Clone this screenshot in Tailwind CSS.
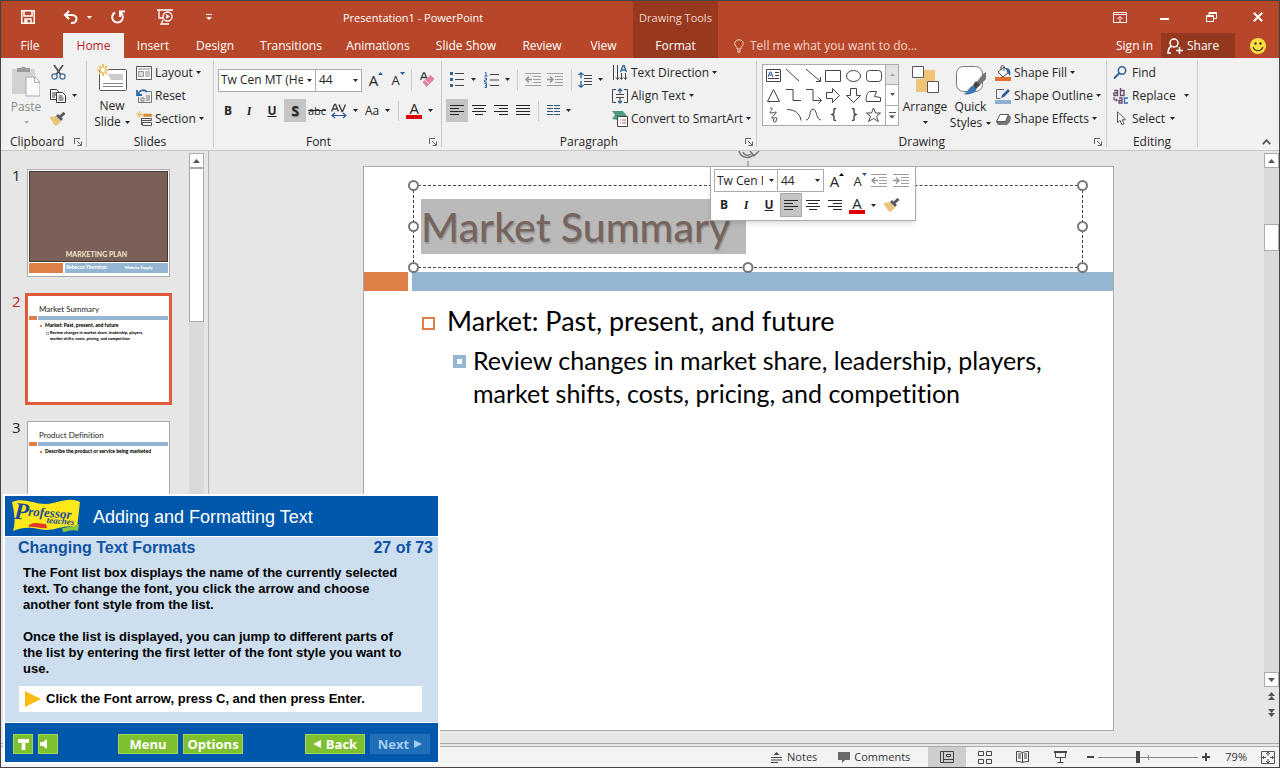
<!DOCTYPE html>
<html lang="en">
<head>
    <meta charset="UTF-8">
    <meta name="viewport" content="width=device-width, initial-scale=1.0">
    <title>Presentation1 - PowerPoint</title>
    <script src="https://cdn.jsdelivr.net/npm/@tailwindcss/browser@4"></script>
</head>
<body class="h-screen overflow-hidden font-['Open_Sans','Noto_Sans',sans-serif] text-[12px] leading-4 text-[#262626]">

<!-- Shared icons -->
<svg class="hidden">
    <symbol id="caret" viewBox="0 0 5 3"><path d="M0 0h5L2.500 3z" fill="currentColor"/></symbol>
    <symbol id="launcher" viewBox="0 0 8 8"><path d="M.5 6V.5H6M3 3l4 4M7.500 3.500v4h-4" fill="none" stroke="currentColor"/></symbol>
    <symbol id="al-left" viewBox="0 0 14 11"><path d="M0 .5h14M0 3.500h9M0 6.500h14M0 9.500h9" stroke="currentColor"/></symbol>
    <symbol id="al-center" viewBox="0 0 14 11"><path d="M0 .5h14M2 3.500h10M0 6.500h14M3 9.500h8" stroke="currentColor"/></symbol>
    <symbol id="al-right" viewBox="0 0 14 11"><path d="M0 .5h14M5 3.500h9M0 6.500h14M5 9.500h9" stroke="currentColor"/></symbol>
    <symbol id="al-just" viewBox="0 0 14 11"><path d="M0 .5h14M0 3.500h14M0 6.500h14M0 9.500h14" stroke="currentColor"/></symbol>
    <symbol id="dedent" viewBox="0 0 16 13"><path d="M0 .5h16M8 3.500h8M8 6.500h8M8 9.500h8M0 12.500h16" stroke="#a0a0a0"/><path d="M1 6.500h6M4 3.500l-3 3 3 3" fill="none" stroke="#959595" stroke-width="1.500"/></symbol>
    <symbol id="indent" viewBox="0 0 16 13"><path d="M0 .5h16M8 3.500h8M8 6.500h8M8 9.500h8M0 12.500h16" stroke="#a0a0a0"/><path d="M0 6.500h6M3 3.500l3 3-3 3" fill="none" stroke="#959595" stroke-width="1.500"/></symbol>
    <symbol id="brush" viewBox="0 0 16 14"><path d="M0 5l6-1 5 6-5 4c-1-1-2-1-3-3C2 8 0 8 0 5z" fill="#ecc379"/><path d="M6 4l2-2 5 5-2 2z" fill="#595959"/><path d="M10 5l4.500-4" stroke="#595959" stroke-width="3"/></symbol>
</svg>

<div class="flex h-full flex-col border border-[#444] bg-[#e6e6e6]">

    <!-- Title bar and tabs -->
    <header class="bg-[#b7472a] text-white">
        <div class="flex h-8 items-stretch">
            <div class="flex flex-1 items-center pl-[19px]">
                <button class="flex w-4 justify-center" aria-label="Save"><svg class="h-[14px] w-[14px]" viewBox="0 0 14 14" fill="none" stroke="#fff"><path d="M.75.75h12.500v12.500H.75zM3 1v5h8V1M4 13V9h6v4" stroke-width="1.500"/><path d="M5.500 10v3" stroke-width="2"/></svg></button>
                <button class="ml-[27px] flex w-4 justify-center" aria-label="Undo"><svg class="h-[14px] w-4" viewBox="0 0 16 14" fill="none" stroke="#fff" stroke-width="2"><path d="M6 1L2 5l4 4M2 5h7c6 0 6 8 0 8H8"/></svg></button>
                <button class="ml-[6px] flex w-2 justify-center" aria-label="Undo history"><svg class="h-[3px] w-[5px]"><use href="#caret"/></svg></button>
                <button class="ml-[17px] flex w-4 justify-center" aria-label="Redo"><svg class="h-[14px] w-[14px]" viewBox="0 0 14 14" fill="none" stroke="#fff" stroke-width="2"><path d="M4 2.500a5.300 5.300 0 1 0 5 0M9 7V1.500h5"/></svg></button>
                <button class="ml-[30px] flex w-[18px] justify-center" aria-label="Start from beginning"><svg class="h-[16px] w-[17px]" viewBox="0 0 17 16" fill="none" stroke="#fff" stroke-width="1.300"><path d="M0 1h16M2 1v8h4M6 11l-2 4h8"/><circle cx="10.500" cy="7.500" r="4.500"/><path d="M9 5l4 2.500L9 10z" fill="#fff" stroke="none"/></svg></button>
                <button class="ml-[31px] flex w-2 justify-center" aria-label="Customize toolbar"><svg class="h-[6px] w-[6px]" viewBox="0 0 6 6"><path d="M0 .5h6" stroke="#fff"/><path d="M0 3h6L3 6z" fill="#fff"/></svg></button>
                <h1 class="ml-[130px] pt-px text-[11px] whitespace-nowrap">Presentation1 - PowerPoint</h1>
            </div>
            <div class="flex w-[85px] items-center justify-center bg-[#96391f] pt-px text-[11px] text-[#f5d5cb]">Drawing Tools</div>
            <div class="flex w-[561px] items-center justify-end gap-[31px] pr-4">
                <button class="mr-[2px]" aria-label="Ribbon display options"><svg class="h-[11px] w-[14px]" viewBox="0 0 14 11" fill="none" stroke="#fff"><path d="M.5.5h13v10H.5zM1 2.500h12M7 10V5M4.500 7L7 4.500 9.500 7"/></svg></button>
                <button aria-label="Minimize"><svg class="h-[11px] w-[10px]" viewBox="0 0 10 11"><path d="M0 7h9" stroke="#fff" stroke-width="2"/></svg></button>
                <button class="ml-[5px]" aria-label="Restore"><svg class="h-[10px] w-[11px]" viewBox="0 0 11 10" fill="none" stroke="#fff"><path d="M.5 3.500h7v6h-7zM.5 4.500h7M3 3V.5h7.500v6H8M3 1.500h7"/></svg></button>
                <button class="ml-[5px]" aria-label="Close"><svg class="h-[10px] w-[10px]" viewBox="0 0 10 10"><path d="M.8.8l8.400 8.400M9.200.8L.8 9.200" stroke="#fff" stroke-width="2"/></svg></button>
            </div>
        </div>
        <nav class="flex h-[25px] items-stretch">
            <div class="flex flex-1 items-stretch">
                <button class="w-[62px] pt-px pr-1">File</button>
                <button class="w-[61px] bg-[#f1f1f1] pt-px text-[#b7272a]">Home</button>
                <button class="w-[58px] pt-px">Insert</button>
                <button class="w-[66px] pt-px">Design</button>
                <button class="w-[86px] pt-px">Transitions</button>
                <button class="w-[88px] pt-px">Animations</button>
                <button class="w-[88px] pt-px">Slide Show</button>
                <button class="w-16 pt-px">Review</button>
                <button class="flex-1 pt-px">View</button>
            </div>
            <button class="w-[85px] bg-[#96391f] pt-px">Format</button>
            <div class="flex w-[561px] items-center">
                <svg class="ml-4 h-[14px] w-[10px]" viewBox="0 0 10 14" fill="none" stroke="#f5d5cb"><path d="M3 10V8.500C-1 5 1 .8 5 .8S11 5 7 8.500V10zM3 12h4M4 13.500h2"/></svg>
                <label for="tell" class="sr-only">Tell me</label>
                <input id="tell" class="ml-[6px] min-w-0 flex-1 pt-px placeholder-[#f5d5cb] outline-none" placeholder="Tell me what you want to do...">
                <button class="mr-2 pt-px">Sign in</button>
                <button class="flex h-full w-[74px] items-center gap-1 bg-[#943920] pt-px pl-[6px]"><svg class="h-4 w-4" viewBox="0 0 16 16" fill="none" stroke="#fff" stroke-width="1.500"><circle cx="7" cy="5" r="4"/><path d="M5 8c-3 1-4 4-4 7h3M9 8l1.500 1M12.500 9v7M9 12.500h7"/></svg>Share</button>
                <svg class="mr-[13px] ml-[15px] h-4 w-4" viewBox="0 0 16 16"><circle cx="8" cy="8" r="8" fill="#ffdf3f"/><circle cx="5.500" cy="5.500" r="1.200" fill="#333"/><circle cx="10.500" cy="5.500" r="1.200" fill="#333"/><path d="M3 9c2 5 8 5 10 0" fill="none" stroke="#333" stroke-width="1.200"/></svg>
            </div>
        </nav>
    </header>

    <!-- Ribbon -->
    <section class="flex h-[93px] shrink-0 items-stretch border-b border-[#c6c6c6] bg-[#f1f1f1] py-[3px] whitespace-nowrap">

        <!-- Clipboard -->
        <div class="flex w-[86px] flex-col border-r border-[#c9c9c9]">
            <div class="flex flex-1 pl-[9px]">
                <button class="flex w-[32px] flex-col items-center pt-[4px] text-[#8a8a8a]">
                    <svg class="h-8 w-7 shrink-0" viewBox="0 0 28 32"><path d="M0 4h23v25H0z" fill="#d2d2d2"/><path d="M5 3h4a3 3 0 0 1 5 0h4v4H5z" fill="#9b9b9b"/><path d="M14 12h9l5 5v14H14z" fill="#fafafa" stroke="#a9a9a9"/><path d="M22.500 12v5.500h5" fill="none" stroke="#a9a9a9"/></svg>
                    <span class="pt-[2px]">Paste</span>
                    <svg class="mt-[6px] h-[3px] w-[5px] shrink-0 text-[#b0b0b0]"><use href="#caret"/></svg>
                </button>
                <div class="ml-2 flex flex-col">
                    <button class="flex h-[23px] w-4 items-center justify-center" aria-label="Cut"><svg class="h-[15px] w-[15px]" viewBox="0 0 15 15" fill="none"><path d="M3 0l7 10M12 0L5 10" stroke="#555" stroke-width="1.800"/><circle cx="3.500" cy="11.500" r="2.600" stroke="#44709c" stroke-width="1.300"/><circle cx="11.500" cy="11.500" r="2.600" stroke="#44709c" stroke-width="1.300"/></svg></button>
                    <button class="flex h-[23px] items-center gap-[6px]" aria-label="Copy"><svg class="h-[14px] w-4" viewBox="0 0 16 14" fill="#fff" stroke="#333"><path d="M.5.5h6l2 2v8h-8zM2 4h4M2 6h4M2 8h3"/><path d="M6.500 3.500h6l3 3v7h-9zM8.500 7h4M8.500 9h5M8.500 11h5"/></svg><svg class="h-[3px] w-[5px]"><use href="#caret"/></svg></button>
                    <button class="flex h-[23px] w-4 items-center" aria-label="Format painter"><svg class="h-[14px] w-4"><use href="#brush"/></svg></button>
                </div>
            </div>
            <div class="flex h-[10px] items-center justify-between pr-[4px] pl-[9px]">Clipboard<svg class="h-2 w-2 text-[#666]"><use href="#launcher"/></svg></div>
        </div>

        <!-- Slides -->
        <div class="flex w-[127px] flex-col border-r border-[#c9c9c9]">
            <div class="flex flex-1 pl-[7px]">
                <button class="flex w-9 flex-col items-center pt-[3px]">
                    <svg class="h-[32px] w-[31px] shrink-0" viewBox="0 0 31 32"><rect x="2.500" y="5.500" width="27" height="21" rx="1" fill="#fff" stroke="#555"/><path d="M11 10h15v6H14z" fill="#ccc"/><path d="M6 19.500h20M6 22.500h20" stroke="#888"/><path d="M6 0v12M0 6h12M2 2l8 8M10 2l-8 8" stroke="#edc374" stroke-width="2"/><circle cx="6" cy="6" r="2" fill="#fff"/></svg>
                    <span class="pt-[2px] leading-[16px]">New</span>
                    <span class="flex items-center gap-1 leading-[16px]">Slide<svg class="h-[3px] w-[5px]"><use href="#caret"/></svg></span>
                </button>
                <div class="ml-[6px] flex flex-col">
                    <button class="flex h-[23px] items-center gap-[3px]"><svg class="h-[14px] w-4" viewBox="0 0 16 14"><path d="M.5.5h15v13H.5z" fill="#fff" stroke="#555"/><path d="M2 3h12M9 6h5M9 8h5M9 10h5" stroke="#888"/><path d="M2.500 5.500h5v5h-5z" fill="#ddd" stroke="#999"/></svg>Layout<svg class="h-[3px] w-[5px]"><use href="#caret"/></svg></button>
                    <button class="flex h-[23px] items-center gap-[3px]"><svg class="h-[14px] w-4" viewBox="0 0 16 14" fill="none"><path d="M2.500 8v5.500h13v-11H9M5 9h3v3H5zM10 7h4M10 9h4M10 11h4" stroke="#777"/><path d="M2 6C3 1 8 0 11 3M1 1v5h5" stroke="#2d6aa8" stroke-width="1.800"/></svg>Reset</button>
                    <button class="flex h-[23px] items-center gap-[3px]"><svg class="h-[15px] w-4" viewBox="0 0 16 15" fill="none"><path d="M8 3.500h7M8 3v2h7V3" stroke="#d08a30" stroke-width="1.500"/><path d="M5.500 7.500h10v2h-10zM6.500 11.500h9v3h-9zM5.500 7v7" stroke="#555"/><path d="M3.500 0v7M0 3.500h7M1 1l5 5M6 1L1 6" stroke="#edc374"/></svg>Section<svg class="h-[3px] w-[5px]"><use href="#caret"/></svg></button>
                </div>
            </div>
            <div class="flex h-[10px] items-center justify-center">Slides</div>
        </div>

        <!-- Font -->
        <div class="flex w-[228px] flex-col border-r border-[#c9c9c9]">
            <div class="flex flex-1 flex-col gap-[7px] pt-[7px] pl-1">
                <div class="flex h-6 items-center">
                    <div class="relative"><label for="font" class="sr-only">Font</label>
                        <select id="font" class="block h-[23px] w-[98px] appearance-none overflow-hidden border border-[#ababab] bg-white pr-3 pl-[2px]"><option>Tw Cen MT (Headings)</option></select>
                        <svg class="pointer-events-none absolute top-[10px] right-[4px] h-[3px] w-[5px]"><use href="#caret"/></svg></div>
                    <div class="relative"><label for="size" class="sr-only">Font size</label>
                        <select id="size" class="block h-[23px] w-[46px] appearance-none border border-l-0 border-[#ababab] bg-white pl-[3px]"><option>44</option></select>
                        <svg class="pointer-events-none absolute top-[10px] right-[4px] h-[3px] w-[5px]"><use href="#caret"/></svg></div>
                    <button class="ml-[6px] flex w-4 items-start justify-center text-[15px]" aria-label="Increase font size">A<svg class="h-[3px] w-[5px] shrink-0 text-[#2b5797]" viewBox="0 0 5 3"><path d="M0 3h5L2.500 0z" fill="currentColor"/></svg></button>
                    <button class="ml-[6px] flex w-4 items-start justify-center text-[13px]" aria-label="Decrease font size">A<svg class="h-[3px] w-[5px] shrink-0 text-[#2b5797]"><use href="#caret"/></svg></button>
                    <span class="ml-[5px] h-5 w-px bg-[#c9c9c9]"></span>
                    <button class="ml-2" aria-label="Clear formatting"><svg class="h-4 w-[15px]" viewBox="0 0 15 16"><path d="M.5 8L3.500 1h1l3 7M2 5.500h4" fill="none" stroke="#444" stroke-width="1.300"/><path d="M2.500 10l8-7 4 4-8 8z" fill="#e0849a"/><path d="M5 8l4.500 4.500" stroke="#fbd8e0"/></svg></button>
                </div>
                <div class="flex h-[23px] items-center font-bold">
                    <button class="w-[20px]">B</button>
                    <button class="w-[22px] font-serif italic">I</button>
                    <button class="w-[24px] underline">U</button>
                    <button class="h-full w-[22px] bg-[#c5c5c5] text-[14px] text-shadow-[1px_1px_1px_#777]">S</button>
                    <button class="w-[22px] text-[11px] font-normal line-through">abc</button>
                    <button class="ml-[3px] flex items-center gap-[6px] font-normal" aria-label="Character spacing"><svg class="h-4 w-4" viewBox="0 0 16 16" fill="none"><path d="M.5 8.500l3-7h1l3 7M2 6h4M8 1.500l3 7h.5l3-7" stroke="#444" stroke-width="1.400"/><path d="M1 12.500h14M4 10l-3 2.500L4 15M12 10l3 2.500-3 2.500" stroke="#2b5797" stroke-width="1.200"/></svg><svg class="h-[3px] w-[5px]"><use href="#caret"/></svg></button>
                    <button class="ml-[7px] flex items-center gap-[6px] font-normal">Aa<svg class="h-[3px] w-[5px]"><use href="#caret"/></svg></button>
                    <span class="ml-2 h-5 w-px bg-[#c9c9c9]"></span>
                    <button class="ml-[7px] flex items-center gap-[6px] font-normal" aria-label="Font color"><span class="w-4 border-b-4 border-[#e00000] text-[15px] leading-[13px]">A</span><svg class="h-[3px] w-[5px]"><use href="#caret"/></svg></button>
                </div>
            </div>
            <div class="flex h-[10px] items-center justify-end gap-[98px] pr-[4px]">Font<svg class="h-2 w-2 text-[#666]"><use href="#launcher"/></svg></div>
        </div>

        <!-- Paragraph -->
        <div class="flex w-[315px] flex-col border-r border-[#c9c9c9]">
            <div class="flex flex-1">
                <div class="flex w-[170px] flex-col gap-[8px] pt-[7px] pl-1">
                    <div class="flex h-[23px] items-center">
                        <button class="ml-[4px] flex items-center gap-[7px]" aria-label="Bullets"><svg class="h-[15px] w-[14px]" viewBox="0 0 14 15"><path d="M5 1.500h9M5 7.500h9M5 13.500h9" stroke="#444"/><path d="M0 0h3v3H0zM0 6h3v3H0zM0 12h3v3H0z" fill="#2f6299"/></svg><svg class="h-[3px] w-[5px]"><use href="#caret"/></svg></button>
                        <button class="ml-[8px] flex items-center gap-[6px]" aria-label="Numbering"><svg class="h-4 w-[15px]" viewBox="0 0 15 16" fill="none"><path d="M6 2.500h9M6 8h9M6 13.500h9" stroke="#444"/><path d="M1 .5h1V4M.5 4h3M.5 6h2v2h-2v2H3M.5 11.500h2v4h-2M1 13.500h2" stroke="#2f6299"/></svg><svg class="h-[3px] w-[5px]"><use href="#caret"/></svg></button>
                        <span class="ml-[7px] h-5 w-px bg-[#c9c9c9]"></span>
                        <button class="ml-[7px]" aria-label="Decrease indent"><svg class="h-[13px] w-4"><use href="#dedent"/></svg></button>
                        <button class="ml-[6px]" aria-label="Increase indent"><svg class="h-[13px] w-4"><use href="#indent"/></svg></button>
                        <span class="ml-[8px] h-5 w-px bg-[#c9c9c9]"></span>
                        <button class="ml-[6px] flex items-center gap-[6px]" aria-label="Line spacing"><svg class="h-4 w-[14px]" viewBox="0 0 14 16" fill="none"><path d="M6 3.500h8M6 6.500h8M6 9.500h8M6 12.500h8" stroke="#444"/><path d="M3 .5v6M.5 3L3 .8 5.500 3M3 9v6M.5 13L3 15.200 5.500 13" stroke="#2f6299" stroke-width="1.300"/></svg><svg class="h-[3px] w-[5px]"><use href="#caret"/></svg></button>
                    </div>
                    <div class="flex h-[23px] items-center">
                        <button class="flex h-full w-[22px] items-center justify-center bg-[#c5c5c5]" aria-label="Align left"><svg class="h-[11px] w-[14px]"><use href="#al-left"/></svg></button>
                        <button class="flex w-[22px] justify-center" aria-label="Center"><svg class="h-[11px] w-[14px]"><use href="#al-center"/></svg></button>
                        <button class="flex w-[22px] justify-center" aria-label="Align right"><svg class="h-[11px] w-[14px]"><use href="#al-right"/></svg></button>
                        <button class="flex w-[22px] justify-center" aria-label="Justify"><svg class="h-[11px] w-[14px]"><use href="#al-just"/></svg></button>
                        <span class="ml-1 h-5 w-px bg-[#c9c9c9]"></span>
                        <button class="ml-2 flex items-center gap-[6px]" aria-label="Columns"><svg class="h-[11px] w-[13px]" viewBox="0 0 13 11"><path d="M0 .5h6M0 3.500h6M0 6.500h6M0 9.500h6M7 .5h6M7 3.500h6M7 6.500h6M7 9.500h6" stroke="#2f5580"/></svg><svg class="h-[3px] w-[5px]"><use href="#caret"/></svg></button>
                    </div>
                </div>
                <div class="flex flex-col">
                    <button class="flex h-[23px] items-center gap-[3px]"><svg class="h-4 w-4" viewBox="0 0 16 16" fill="none"><path d="M1.500 0v15M5.500 0v15M9.500 8v6M13.500 8v6M4 12.500l1.500 2L7 12.500M8 12.500l1.500 2 1.500-2M12 12.500l1.500 2 1.500-2" stroke="#444"/><path d="M8.500 7l2.500-6.500h1L14.500 7M9.500 5h4" stroke="#2f6299" stroke-width="1.300"/></svg>Text Direction<svg class="h-[3px] w-[5px]"><use href="#caret"/></svg></button>
                    <button class="flex h-[23px] items-center gap-[3px]"><svg class="h-4 w-4" viewBox="0 0 16 16" fill="none"><path d="M4 1.500H.5v13H4M12 1.500h3.500v13H12M4 6.500h8M4 9.500h8" stroke="#444"/><path d="M8 .5v5M6 3l2-2 2 2M8 10v5M6 13l2 2 2-2" stroke="#2f6299" stroke-width="1.300"/></svg>Align Text<svg class="h-[3px] w-[5px]"><use href="#caret"/></svg></button>
                    <button class="flex h-[23px] items-center gap-[3px]"><svg class="h-4 w-4" viewBox="0 0 16 16"><path d="M0 0h11l4 5H6v4L0 8l3-4z" fill="#4f9a83"/><path d="M5.500 5.500h10v10h-10z" fill="#fff" stroke="#444"/><path d="M8 9h1M8 12h1M10 9h4M10 12h4" stroke="#b06060"/></svg>Convert to SmartArt<svg class="h-[3px] w-[5px]"><use href="#caret"/></svg></button>
                </div>
            </div>
            <div class="flex h-[10px] items-center justify-end gap-[127px] pr-[3px]">Paragraph<svg class="h-2 w-2 text-[#666]"><use href="#launcher"/></svg></div>
        </div>

        <!-- Drawing -->
        <div class="flex w-[350px] flex-col border-r border-[#c9c9c9]">
            <div class="flex flex-1">
                <div class="mt-[3px] ml-[5px] flex h-[62px] w-[137px] border border-[#ababab] bg-white">
                    <svg class="h-[60px] w-[122px]" viewBox="0 0 122 60" fill="none" stroke="#444">
                        <path d="M3.500 4.500h14v12h-14zM12 7.500h4M12 10.500h4M5 13.500h11"/><path d="M5 12l2-5h1l2 5M6 10h3" stroke="#2f5597"/>
                        <path d="M23 4l13 12M43 4l14 12M57.500 12v4.500H53M62.500 5.500h15v11h-15zM4.500 36.500l6-12 6 12z"/>
                        <ellipse cx="90.500" cy="11" rx="7" ry="5.500"/><rect x="103.500" y="5.500" width="15" height="11" rx="3"/>
                        <path d="M23 24.500h7v11h8M43 24.500h7v11h8M55.500 32.500l3 3-3 3M63.500 27.500h6v-4l7 7-7 7v-4h-6zM87.500 23.500h6v7h4l-7 7-7-7h4zM103.500 36.500c-1-4 0-8 3-10h7l-2 5 6 1v4z"/>
                        <path d="M7 43c6 0-3 5 1 5s7-3 4 1-5 5-1 4 3 0 2 3-4 0-2-2M24 44.500c8 0 13 4 14 11M43 55c5 0 3-11 7-11s3 11 8 11"/>
                        <path d="M73 43.500c-3 0-2 1-2 3s0 2-2 3c2 1 2 1 2 3s-1 3 2 3M89 43.500c3 0 2 1 2 3s0 2 2 3c-2 1-2 1-2 3s1 3-2 3" stroke-width="1.400"/>
                        <path d="M110.500 43l2 5h5l-4 3.500 2 5-5-3-5 3 2-5-4-3.500h5z"/>
                    </svg>
                    <div class="flex flex-1 flex-col border-l border-[#ababab] text-[#555]">
                        <button class="flex flex-1 items-center justify-center bg-[#e3e3e3] text-[#aaa]" aria-label="Scroll up"><svg class="h-[3px] w-[5px]" viewBox="0 0 5 3"><path d="M0 3h5L2.500 0z" fill="currentColor"/></svg></button>
                        <button class="flex flex-1 items-center justify-center border-y border-[#ababab]" aria-label="Scroll down"><svg class="h-[3px] w-[5px]"><use href="#caret"/></svg></button>
                        <button class="flex flex-1 flex-col items-center justify-center gap-[2px]" aria-label="More shapes"><span class="h-px w-[7px] bg-[#555]"></span><svg class="h-[4px] w-[6px]" viewBox="0 0 5 3"><use href="#caret"/></svg></button>
                    </div>
                </div>
                <button class="ml-1 flex w-[44px] flex-col items-center pt-[4px]">
                    <svg class="h-[28px] w-[28px] shrink-0" viewBox="0 0 28 28"><path d="M12 5h12v12H12zM5 14h11v13H5z" fill="#f0c376"/><path d="M1.500 1.500h11v11h-11zM16.500 16.500h11v11h-11z" fill="#fff" stroke="#555"/></svg>
                    <span class="mt-[6px]">Arrange</span>
                    <svg class="mt-[6px] h-[3px] w-[5px] shrink-0"><use href="#caret"/></svg>
                </button>
                <button class="ml-[3px] flex w-[41px] flex-col items-center pt-[4px]">
                    <svg class="h-[31px] w-[30px] shrink-0" viewBox="0 0 30 31"><rect x=".5" y="1.500" width="26" height="25" rx="7" fill="#fff" stroke="#777"/><path d="M19 19l8-10 3-2v7l-8 8z" fill="#777"/><path d="M7 29c5-1 5-6 9-8 4-1 6 3 3 6-3 2-8 3-12 2z" fill="#3c78b4"/><path d="M17 20l3-4 4 4-4 4z" fill="#444"/></svg>
                    <span class="pt-[3px] leading-[16px]">Quick</span>
                    <span class="flex items-center gap-1 leading-[16px]">Styles<svg class="h-[3px] w-[5px]"><use href="#caret"/></svg></span>
                </button>
                <div class="ml-[4px] flex flex-col">
                    <button class="flex h-[23px] items-center gap-[3px]"><svg class="h-4 w-4" viewBox="0 0 16 16"><path d="M0 12h16v4H0z" fill="#e0702c"/><path d="M3 7l6-5 5 5-6 5z" fill="#fff" stroke="#444"/><path d="M6 5V2c0-2 3-2 3 0v4" fill="none" stroke="#444"/><path d="M11 3c4 0 5 3 4 8l-3-4z" fill="#2f6299"/></svg>Shape Fill<svg class="h-[3px] w-[5px]"><use href="#caret"/></svg></button>
                    <button class="flex h-[23px] items-center gap-[3px]"><svg class="h-4 w-4" viewBox="0 0 16 16"><path d="M0 12h16v4H0z" fill="#8fb0d0"/><path d="M9 1.500H1.500v9h4" fill="none" stroke="#666"/><path d="M6 10l1-3 6-6 2 2-6 6z" fill="#2f6299"/></svg>Shape Outline<svg class="h-[3px] w-[5px]"><use href="#caret"/></svg></button>
                    <button class="flex h-[23px] items-center gap-[3px]"><svg class="h-4 w-4" viewBox="0 0 16 16"><path d="M5 4h9l2 2-1 5-3 3H3l-2-3z" fill="#777"/><path d="M5 3.500h8.500l-3 7H1.500z" fill="#fff" stroke="#555"/></svg>Shape Effects<svg class="h-[3px] w-[5px]"><use href="#caret"/></svg></button>
                </div>
            </div>
            <div class="flex h-[10px] items-center justify-end gap-[149px] pr-[4px]">Drawing<svg class="h-2 w-2 text-[#666]"><use href="#launcher"/></svg></div>
        </div>

        <!-- Editing -->
        <div class="flex w-[91px] flex-col border-r border-[#c9c9c9]">
            <div class="flex flex-1 flex-col pl-[6px]">
                <button class="flex h-[23px] items-center gap-[5px]"><svg class="h-[13px] w-[14px]" viewBox="0 0 14 13" fill="none" stroke="#2f6299"><circle cx="9" cy="4.500" r="3.700" stroke-width="1.500"/><path d="M6 7.500L1 12.500" stroke-width="2"/></svg>Find</button>
                <button class="flex h-[23px] items-center gap-[4px]"><svg class="h-4 w-[15px]" viewBox="0 0 15 16" fill="none" stroke-width="1.400"><path d="M1 2.500h3.500v5H1V5h3.500M7.500 0v7.500H11v-5H7.500" stroke="#6b4a6f"/><path d="M6 10h3v5H6v-2.500h3" stroke="#6b4a6f"/><path d="M1 9v3h3M3 10.500L4.500 12 3 13.500" stroke="#444" stroke-width="1"/><path d="M15 10h-3.500v5H15" stroke="#2f6fb5"/></svg>Replace<svg class="ml-1 h-[3px] w-[5px]"><use href="#caret"/></svg></button>
                <button class="flex h-[23px] items-center gap-[5px]"><svg class="h-[15px] w-[14px]" viewBox="0 0 14 15"><path d="M4.500.8v11l2.500-2.500 2 4.500 2-1-2-4h3.500z" fill="#fff" stroke="#555"/></svg>Select<svg class="h-[3px] w-[5px]"><use href="#caret"/></svg></button>
            </div>
            <div class="flex h-[10px] items-center justify-center">Editing</div>
        </div>
        <div class="flex flex-1 items-end justify-end pr-2 pb-[2px]"><button class="leading-none" aria-label="Collapse ribbon"><svg class="h-[6px] w-[9px]" viewBox="0 0 9 6"><path d="M.8 5.200l3.700-4 3.700 4" fill="none" stroke="#555" stroke-width="1.800"/></svg></button></div>
    </section>

    <!-- Work area -->
    <main class="flex min-h-0 flex-1 font-['Lato',sans-serif] [font-variant-ligatures:none]">

        <!-- Slide thumbnails -->
        <aside class="flex w-[208px] shrink-0 overflow-hidden border-r border-[#b4b4b4]">
            <ol class="flex flex-1 flex-col gap-[18px] pt-[18px] pl-[11px]">
                <li class="flex shrink-0 gap-[5px]"><span class="w-[10px] font-['Open_Sans'] text-[15px] leading-3">1</span>
                    <div class="flex h-[108px] w-[143px] flex-col border border-[#ababab] bg-white p-px">
                        <div class="flex flex-1 items-end justify-center border border-[#403733] bg-[#7b6057] pr-1 pb-[2px] text-[7px] leading-[10px] font-bold text-[#f0e6cf]">MARKETING PLAN</div>
                        <div class="mt-px mb-[2px] flex h-[10px] gap-[2px] text-[5px] leading-[9px] font-black text-white"><div class="w-[34px] bg-[#dd8047]"></div><div class="flex flex-1 gap-[18px] bg-[#94b6d2] pl-px"><span>Rebecca Thornton</span><span class="text-[4px]">Website Supply</span></div></div>
                    </div></li>
                <li class="flex shrink-0 gap-[5px]"><span class="w-[10px] font-['Open_Sans'] text-[15px] leading-3 text-[#b7272a]">2</span>
                    <div class="h-[108px] w-[143px] bg-white px-[2px] pt-[9px] outline-3 outline-offset-[-1px] outline-[#e05a3c]">
                        <h3 class="pl-[10px] text-[8px] leading-[10px]">Market Summary</h3>
                        <div class="mt-[2px] flex h-1 gap-px"><div class="w-2 bg-[#dd8047]"></div><div class="flex-1 bg-[#94b6d2]"></div></div>
                        <p class="mt-[2px] flex items-center gap-[3px] pl-[11px] text-[5px] leading-[7px] font-black text-black"><span class="h-[2px] w-[2px] bg-[#dd8047]"></span>Market: Past, present, and future</p>
                        <p class="mt-px flex gap-px pl-[17px] text-[4px] leading-[6px] font-black text-black"><span class="mt-[2px] h-[3px] w-[3px] border border-[#94b6d2]"></span><span>Review changes in market share, leadership, players,<br>market shifts, costs, pricing, and competition</span></p>
                    </div></li>
                <li class="flex shrink-0 gap-[5px]"><span class="w-[10px] font-['Open_Sans'] text-[15px] leading-3">3</span>
                    <div class="h-[108px] w-[143px] border border-[#ababab] bg-white px-px pt-2">
                        <h3 class="pl-[10px] text-[8px] leading-[10px]">Product Definition</h3>
                        <div class="mt-[2px] flex h-1 gap-px"><div class="w-2 bg-[#dd8047]"></div><div class="flex-1 bg-[#94b6d2]"></div></div>
                        <p class="mt-[2px] flex items-center gap-[3px] pl-[11px] text-[5px] leading-[7px] font-black text-black"><span class="h-[2px] w-[2px] bg-[#dd8047]"></span>Describe the product or service being marketed</p>
                    </div></li>
            </ol>
            <div class="mt-[2px] mr-1 w-[15px] bg-[#dadada]">
                <button class="flex h-[15px] w-full items-center justify-center border border-[#ababab] bg-white" aria-label="Scroll up"><svg class="h-[4px] w-[7px]" viewBox="0 0 7 4"><path d="M0 4h7L3.500 0z" fill="#555"/></svg></button>
                <div class="h-[154px] border border-[#ababab] bg-white"></div>
            </div>
        </aside>

        <!-- Slide canvas -->
        <div class="flex min-w-0 flex-1 justify-center overflow-hidden pt-[15px] pb-[12px] pl-1">
            <article class="relative flex aspect-[751/565] h-full flex-col border border-[#ababab] bg-white text-black">
                <div class="relative mt-[18px] mr-[30px] ml-[49px] h-[83px] border border-dashed border-[#444] px-[7px] py-[13px]">
                    <h2 class="inline-block bg-[#bababa] pr-4 text-[41px] leading-[55px] font-medium text-[#75655e] text-shadow-[1px_2px_1px_#999]">Market Summary</h2>
                    <svg class="absolute -top-[41px] left-[324px] h-[41px] w-6" viewBox="0 0 24 41" fill="none" stroke="#777"><path d="M10 16v25"/><path d="M1 6a8.500 8.500 0 0 0 15 3M5 7a5 5 0 0 0 8 2M12 6l4 5 5-5" stroke-width="1.500"/></svg>
                    <span class="absolute -top-[6px] -left-[6px] h-[11px] w-[11px] rounded-full border-2 border-[#777] bg-white"></span>
                    <span class="absolute top-[35px] -left-[6px] h-[11px] w-[11px] rounded-full border-2 border-[#777] bg-white"></span>
                    <span class="absolute -bottom-[6px] -left-[6px] z-10 h-[11px] w-[11px] rounded-full border-2 border-[#777] bg-white"></span>
                    <span class="absolute -bottom-[6px] left-1/2 z-10 h-[11px] w-[11px] -translate-x-1/2 rounded-full border-2 border-[#777] bg-white"></span>
                    <span class="absolute -top-[6px] -right-[6px] h-[11px] w-[11px] rounded-full border-2 border-[#777] bg-white"></span>
                    <span class="absolute top-[35px] -right-[6px] h-[11px] w-[11px] rounded-full border-2 border-[#777] bg-white"></span>
                    <span class="absolute -right-[6px] -bottom-[6px] z-10 h-[11px] w-[11px] rounded-full border-2 border-[#777] bg-white"></span>
                </div>
                <div class="mt-[4px] flex h-[19px] gap-1"><div class="w-11 bg-[#dd8047]"></div><div class="flex-1 bg-[#94b6d2]"></div></div>
                <ul class="pt-[12px] pl-[58px]">
                    <li class="flex items-start gap-[12px] text-[27px] leading-9"><span class="mt-[14px] h-[13px] w-[13px] shrink-0 border-2 border-[#dd8047]"></span>Market: Past, present, and future</li>
                    <li class="mt-[5px] flex items-start gap-[7px] pl-[31px] text-[25px] leading-[33px]"><span class="mt-[11px] h-[13px] w-[13px] shrink-0 border-4 border-[#94b6d2]"></span><span>Review changes in market share, leadership, players,<br>market shifts, costs, pricing, and competition</span></li>
                </ul>

                <!-- Mini toolbar -->
                <div class="absolute -top-px left-[346px] z-20 flex h-[55px] w-[206px] flex-col border border-[#ababab] bg-white px-[3px] pt-px font-['Open_Sans'] text-[12px] leading-4 text-[#262626] shadow-md">
                    <div class="flex h-[25px] items-center">
                        <div class="relative"><label for="mini-font" class="sr-only">Font</label>
                            <select id="mini-font" class="block h-[23px] w-[64px] appearance-none overflow-hidden border border-[#ababab] bg-white pr-[14px] pl-[2px]"><option>Tw Cen MT (Headings)</option></select>
                            <svg class="pointer-events-none absolute top-[10px] right-[4px] h-[3px] w-[5px]"><use href="#caret"/></svg></div>
                        <div class="relative"><label for="mini-size" class="sr-only">Font size</label>
                            <select id="mini-size" class="block h-[23px] w-[46px] appearance-none border border-l-0 border-[#ababab] bg-white pl-[3px]"><option>44</option></select>
                            <svg class="pointer-events-none absolute top-[10px] right-[4px] h-[3px] w-[5px]"><use href="#caret"/></svg></div>
                        <button class="ml-[5px] flex w-4 items-start justify-center text-[15px]" aria-label="Increase font size">A<svg class="h-[3px] w-[5px] shrink-0" viewBox="0 0 5 3"><path d="M0 3h5L2.500 0z"/></svg></button>
                        <button class="ml-[7px] flex w-4 items-start justify-center text-[13px]" aria-label="Decrease font size">A<svg class="h-[3px] w-[5px] shrink-0 text-[#2b5797]"><use href="#caret"/></svg></button>
                        <button class="ml-[3px]" aria-label="Decrease indent"><svg class="h-[13px] w-4"><use href="#dedent"/></svg></button>
                        <button class="ml-[6px]" aria-label="Increase indent"><svg class="h-[13px] w-4"><use href="#indent"/></svg></button>
                    </div>
                    <div class="flex h-6 items-center font-bold">
                        <button class="w-5">B</button>
                        <button class="w-6 font-serif italic">I</button>
                        <button class="w-[22px] underline">U</button>
                        <button class="flex h-full w-[22px] items-center justify-center border border-[#ababab] bg-[#c5c5c5]" aria-label="Align left"><svg class="h-[11px] w-[14px]"><use href="#al-left"/></svg></button>
                        <button class="flex w-[22px] justify-center" aria-label="Center"><svg class="h-[11px] w-[14px]"><use href="#al-center"/></svg></button>
                        <button class="flex w-[22px] justify-center" aria-label="Align right"><svg class="h-[11px] w-[14px]"><use href="#al-right"/></svg></button>
                        <button class="ml-[3px] flex items-center gap-[6px] font-normal" aria-label="Font color"><span class="w-4 border-b-4 border-[#e00000] text-[15px] leading-[13px]">A</span><svg class="h-[3px] w-[5px]"><use href="#caret"/></svg></button>
                        <button class="ml-2" aria-label="Format painter"><svg class="h-[14px] w-4"><use href="#brush"/></svg></button>
                    </div>
                </div>
            </article>
        </div>

        <!-- Vertical scroll bar -->
        <div class="mt-[2px] flex w-[15px] shrink-0 flex-col text-[#555]">
            <button class="flex h-[15px] items-center justify-center border border-[#ababab] bg-white" aria-label="Scroll up"><svg class="h-[4px] w-[7px]" viewBox="0 0 7 4"><path d="M0 4h7L3.500 0z" fill="currentColor"/></svg></button>
            <div class="flex-1 bg-[#dadada] pt-[56px]"><div class="h-[27px] border border-[#ababab] bg-white"></div></div>
            <button class="flex h-[15px] items-center justify-center border border-[#ababab] bg-white" aria-label="Scroll down"><svg class="h-[4px] w-[7px]" viewBox="0 0 7 4"><path d="M0 0h7L3.500 4z" fill="currentColor"/></svg></button>
            <button class="mt-[5px] flex justify-center" aria-label="Previous slide"><svg class="h-[8px] w-[7px]" viewBox="0 0 7 8"><path d="M0 4h7L3.500 0zM0 8h7L3.500 4z" fill="currentColor"/></svg></button>
            <button class="mt-[9px] mb-[26px] flex justify-center" aria-label="Next slide"><svg class="h-[8px] w-[7px]" viewBox="0 0 7 8"><path d="M0 0h7L3.500 4zM0 4h7L3.500 8z" fill="currentColor"/></svg></button>
        </div>
    </main>

    <!-- Status bar -->
    <footer class="flex h-6 shrink-0 items-stretch justify-end border-t border-[#ababab]">
        <div class="mt-[2px] flex flex-1 items-center justify-end border-t border-[#ababab] bg-[#f3f3f3] text-[11px] text-[#333]">
            <button class="flex items-center gap-[5px]"><svg class="h-[11px] w-[11px]" viewBox="0 0 11 11"><path d="M2.500 3h6l-3-3z" fill="#444"/><path d="M0 5.500h11M0 8h11M0 10.500h7" stroke="#444"/></svg>Notes</button>
            <button class="ml-[21px] flex items-center gap-1"><svg class="h-[11px] w-3" viewBox="0 0 12 11"><path d="M0 0h12v8H7l-3 3V8H0z" fill="#6a6a6a"/></svg>Comments</button>
            <button class="ml-[18px] flex h-full w-[38px] items-center justify-center bg-[#cdcdcd]" aria-label="Normal view"><svg class="h-[12px] w-[14px]" viewBox="0 0 14 12" fill="none" stroke="#444"><path d="M.5.5h13v11H.5zM3.500 1v10M4 8.500h9M6.500 3.500h4v2h-4z"/></svg></button>
            <button class="flex w-[38px] justify-center" aria-label="Slide sorter"><svg class="h-[13px] w-[14px]" viewBox="0 0 14 13" fill="none" stroke="#444"><path d="M.5.5h5v4h-5zM8.500.5h5v4h-5zM.5 8.500h5v4h-5zM8.500 8.500h5v4h-5z"/></svg></button>
            <button class="flex w-[37px] justify-center" aria-label="Reading view"><svg class="h-[12px] w-[14px]" viewBox="0 0 14 12" fill="none" stroke="#444"><path d="M6.500 1.500c-2-1-4-1-6-1v10c2 0 4 0 6 1 2-1 4-1 6-1V.5c-2 0-4 0-6 1v10M2 3h3M2 5h3M2 7h3M8 3h3M8 5h3M8 7h3"/></svg></button>
            <button class="flex w-[38px] justify-center" aria-label="Slide show"><svg class="h-[12px] w-[13px]" viewBox="0 0 13 12" fill="none" stroke="#444"><path d="M0 1h13" stroke-width="2"/><path d="M1.500 2v4.500h10V2M6.500 7v4M3.500 11.500h6"/></svg></button>
            <button class="ml-2 w-[7px]" aria-label="Zoom out"><span class="block h-[2px] bg-[#444]"></span></button>
            <label for="zoom" class="sr-only">Zoom</label>
            <div class="relative ml-[4px] flex h-4 w-[100px] items-center">
                <input id="zoom" type="range" value="39" class="h-3 w-full appearance-none bg-[linear-gradient(#8a8a8a,#8a8a8a)] bg-[length:100%_1px] bg-center bg-no-repeat [&::-webkit-slider-thumb]:h-3 [&::-webkit-slider-thumb]:w-1 [&::-webkit-slider-thumb]:appearance-none [&::-webkit-slider-thumb]:bg-[#444]">
                <span class="pointer-events-none absolute top-[6px] left-1/2 h-[5px] w-px bg-[#8a8a8a]"></span>
            </div>
            <button class="ml-[4px]" aria-label="Zoom in"><svg class="h-2 w-2" viewBox="0 0 8 8"><path d="M0 4h8M4 0v8" stroke="#444" stroke-width="2"/></svg></button>
            <span class="ml-[15px]">79%</span>
            <button class="mr-[4px] ml-[14px]" aria-label="Fit slide to window"><svg class="h-[13px] w-[14px]" viewBox="0 0 14 13" fill="none" stroke="#555"><path d="M.5.5h13v12H.5zM7 1v4M5 3l2-2 2 2M7 12V8M5 10l2 2 2-2M1 6.500h4M3 5L1.500 6.500 3 8M13 6.500H9M11 5l1.500 1.500L11 8"/></svg></button>
        </div>
    </footer>
</div>

<!-- Tutorial panel -->
<section class="absolute bottom-[4px] left-[3px] flex w-[437px] flex-col border-2 border-white bg-[#cddeee] font-['Liberation_Sans',Arial,sans-serif] text-black">
    <div class="flex h-[41px] items-center border-b border-white bg-[#0058ac] pl-[6px] text-white">
        <svg class="h-[34px] w-[70px]" viewBox="0 0 70 34">
            <path d="M1 3C14-3 26 8 42 4s20-4 27-1l-3 26c-12-6-22 5-38 1C18 28 12 28 2 32c3-9 1-20-1-29z" fill="#ffe81a"/>
            <path d="M18 26c6-4 12-1 17-1l1 4c-6 1-12-2-18-1z" fill="#e1372b"/>
            <path d="M51 29c6-1 11-1 17-4l-1 7c-6-2-11 1-15 1z" fill="#8cc63f"/>
            <g transform="rotate(4 35 17)" fill="#1a4a9c" font-family="Liberation Serif" font-weight="bold" font-style="italic"><text x="3" y="22" font-size="24">P</text><text x="17" y="18" font-size="13">rofessor</text><text x="36" y="24" font-size="9">teaches</text></g>
        </svg>
        <h2 class="ml-[12px] pt-[2px] text-[18px] leading-6">Adding and Formatting Text</h2>
    </div>
    <div class="flex justify-between pt-px pr-[5px] pl-[13px] text-[16px] leading-5 font-bold text-[#0f53a4]"><h3>Changing Text Formats</h3><span>27 of 73</span></div>
    <div class="mt-[7px] ml-[18px] text-[13px] leading-4 font-bold">
        <p>The Font list box displays the name of the currently selected<br>text. To change the font, you click the arrow and choose<br>another font style from the list.</p>
        <p class="mt-4">Once the list is displayed, you can jump to different parts of<br>the list by entering the first letter of the font style you want to<br>use.</p>
    </div>
    <div class="mt-[9px] mr-4 mb-[10px] ml-[14px] flex h-[26px] items-center gap-[5px] bg-white pl-[6px] text-[13px] font-bold">
        <svg class="h-4 w-4" viewBox="0 0 16 16"><path d="M0 0l16 8-16 8z" fill="#fdbb12"/></svg>Click the Font arrow, press C, and then press Enter.
    </div>
    <div class="flex h-[40px] items-center border-t border-white bg-[#0058ac] px-2 pt-[3px] font-['Open_Sans'] text-[13px] font-bold text-white">
        <button class="flex h-5 w-5 items-center justify-center border border-[#a6d65c] bg-[#7fc031]" aria-label="Text"><svg class="h-[11px] w-[11px]" viewBox="0 0 12 12"><path d="M0 2h12M6 2v10" stroke="#fff" stroke-width="4"/></svg></button>
        <button class="ml-[5px] flex h-5 w-5 items-center border border-[#a6d65c] bg-[#7fc031] pl-px" aria-label="Sound"><svg class="h-[10px] w-[7px]" viewBox="0 0 7 10"><path d="M0 3h3l4-3v10L3 7H0z" fill="#fff"/></svg></button>
        <button class="ml-[60px] h-5 w-[60px] border border-[#a6d65c] bg-[#7fc031]">Menu</button>
        <button class="ml-[5px] h-5 w-[60px] border border-[#a6d65c] bg-[#7fc031]">Options</button>
        <button class="ml-auto flex h-5 w-[60px] items-center justify-center gap-[5px] border border-[#a6d65c] bg-[#7fc031]"><svg class="h-2 w-2" viewBox="0 0 8 8"><path d="M8 0L0 4l8 4z" fill="#fff"/></svg>Back</button>
        <button class="ml-[5px] flex h-5 w-[60px] items-center justify-center gap-[5px] border border-[#2673bd] bg-[#206db8] text-[#a5cdef]">Next<svg class="h-2 w-2" viewBox="0 0 8 8"><path d="M0 0l8 4-8 4z" fill="#a5cdef"/></svg></button>
    </div>
</section>

</body>
</html>
